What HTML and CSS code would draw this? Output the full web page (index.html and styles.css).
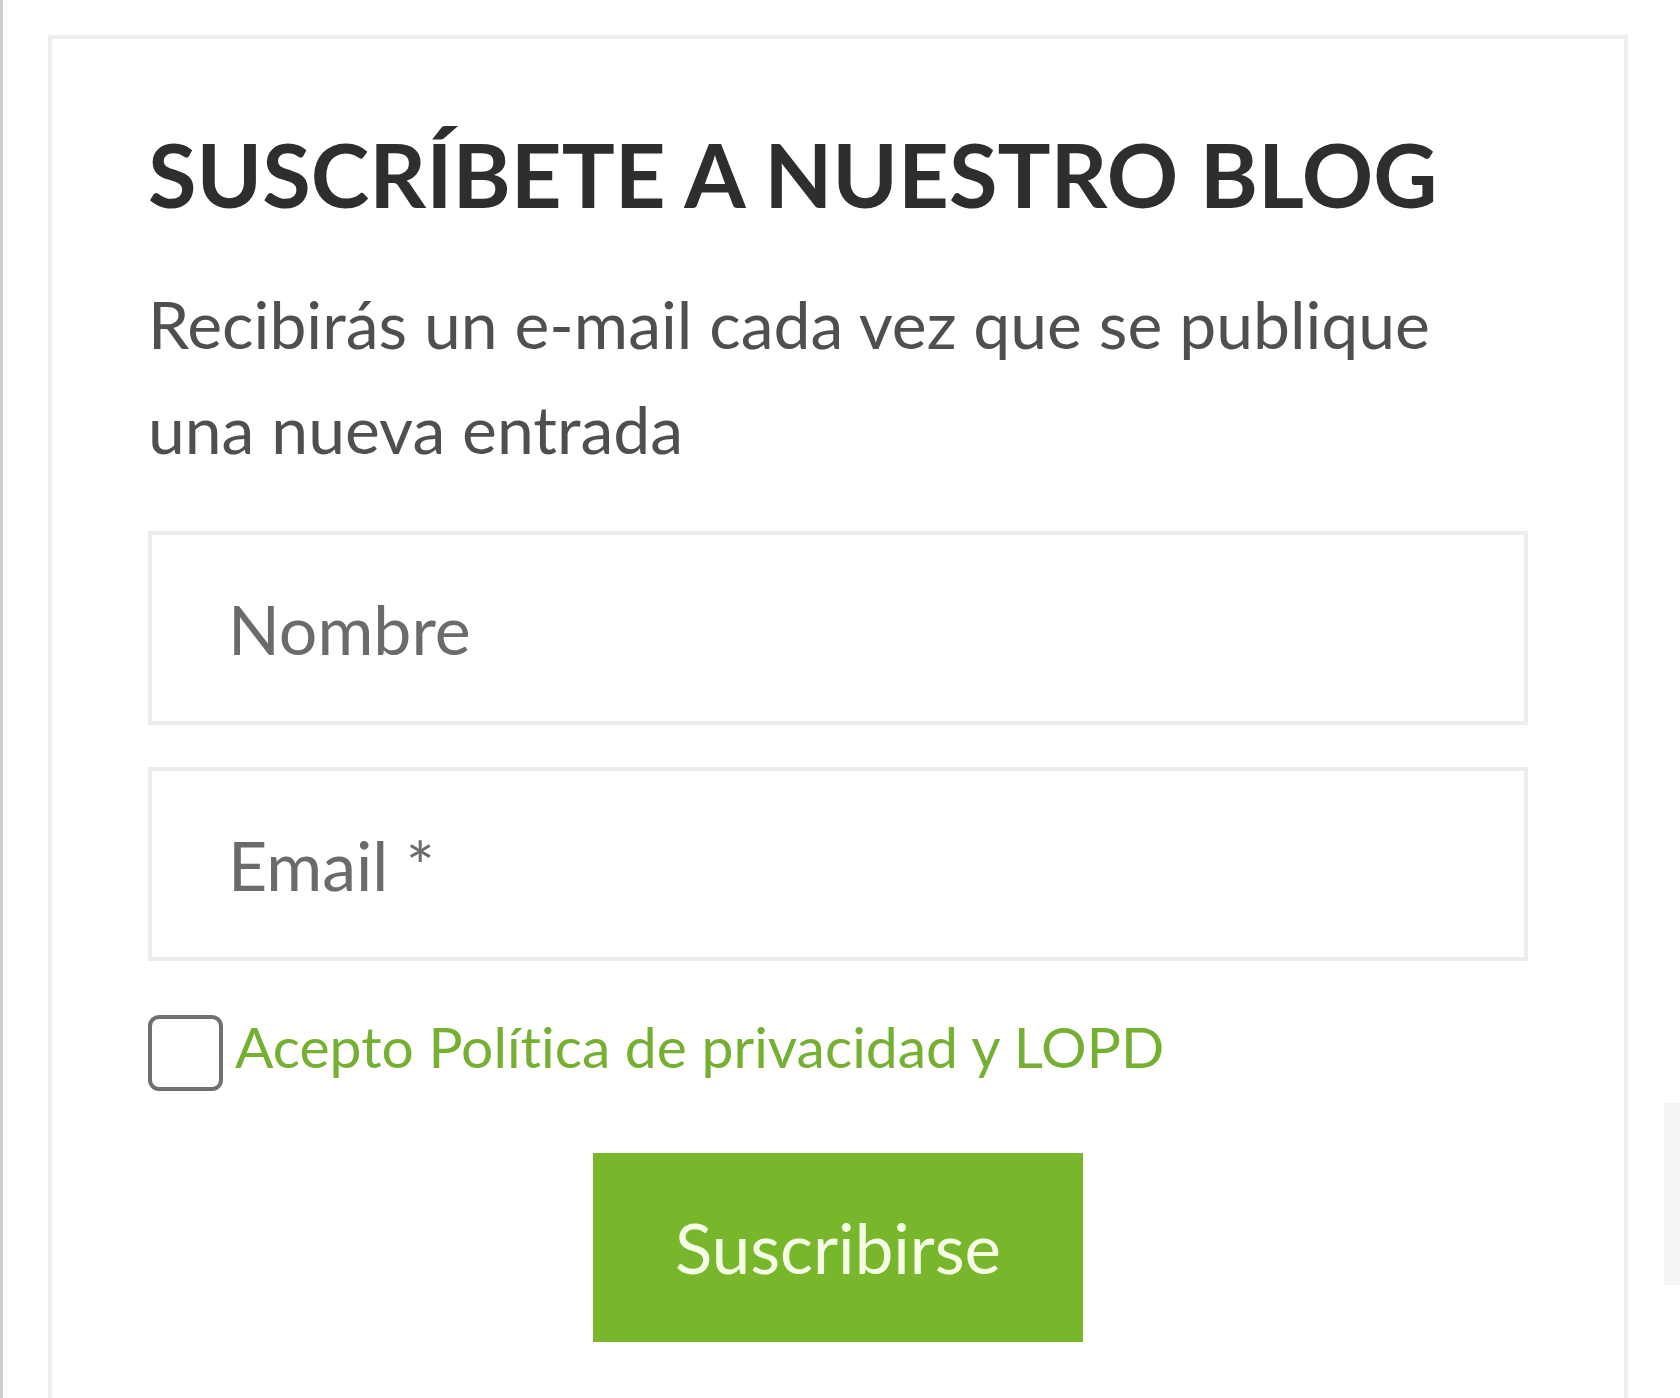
FILE: index.html
```html
<!DOCTYPE html>
<html lang="es">
<head>
<meta charset="utf-8">
<title>Suscríbete</title>
<link rel="stylesheet" href="styles.css">
</head>
<body>
<div class="page">
  <section class="widget">
    <h2 class="widget-title">SUSCRÍBETE A NUESTRO BLOG</h2>
    <p class="widget-text">Recibirás un e-mail cada vez que se publique una nueva entrada</p>
    <form class="sub-form">
      <input class="field" type="text" placeholder="Nombre">
      <input class="field field-email" type="email" placeholder="Email *">
      <label class="consent">
        <input class="check" type="checkbox">
        <span class="consent-text">Acepto Política de privacidad y LOPD</span>
      </label>
      <div class="actions">
        <button class="btn" type="button">Suscribirse</button>
      </div>
    </form>
  </section>
  <div class="side-tab"></div>
</div>
</body>
</html>
```

FILE: styles.css
```css
html, body {
  margin: 0;
  padding: 0;
  background: #ffffff;
  height: 100%;
  overflow: hidden;
}
body {
  font-family: "Lato", "Open Sans", sans-serif;
  font-variant-ligatures: none;
}
.page {
  position: relative;
  min-height: 1398px;
  border-left: 3px solid #cfcfcf;
  padding-top: 35px;
  padding-left: 45px;
  box-sizing: border-box;
  width: 1680px;
}
.widget {
  width: 1580px;
  box-sizing: border-box;
  border: 4px solid #eeeeee;
  border-bottom: none;
  padding: 82px 96px 200px 96px;
  background: #fff;
}
.widget-title {
  margin: 0 0 44px 0;
  font-family: "Lato", sans-serif;
  font-weight: 700;
  font-size: 88.5px;
  line-height: 1.2;
  color: #2e2e2e;
  white-space: nowrap;
}
.widget-text {
  margin: 0 0 50px 0;
  font-size: 66px;
  line-height: 105px;
  color: #4f4f4f;
}
.sub-form {
  display: flex;
  flex-direction: column;
}
.field {
  box-sizing: border-box;
  width: 100%;
  height: 194px;
  border: 4px solid #ececec;
  border-radius: 0;
  padding: 0 76px;
  font-family: "Lato", sans-serif;
  font-size: 68px;
  color: #555;
  background: #fff;
  outline: none;
}
.field::placeholder {
  color: #6b6b6b;
  opacity: 1;
}
.field-email {
  margin-top: 42px;
}
.consent {
  display: flex;
  align-items: flex-start;
  gap: 12px;
  margin-top: 54px;
}
.check {
  appearance: none;
  -webkit-appearance: none;
  margin: 0;
  width: 75px;
  height: 76px;
  box-sizing: border-box;
  border: 4px solid #707070;
  border-radius: 11px;
  background: #fff;
  flex: none;
}
.consent-text {
  font-size: 57px;
  line-height: 62px;
  color: #76b032;
}
.actions {
  display: flex;
  justify-content: center;
  margin-top: 62px;
}
.btn {
  width: 490px;
  height: 189px;
  border: none;
  border-radius: 0;
  background: #78b62c;
  color: #f5ffe6;
  font-family: "Lato", sans-serif;
  font-size: 69px;
  cursor: pointer;
}
.side-tab {
  position: absolute;
  right: 0;
  top: 1103px;
  width: 16px;
  height: 182px;
  background: #f4f4f4;
}
```
